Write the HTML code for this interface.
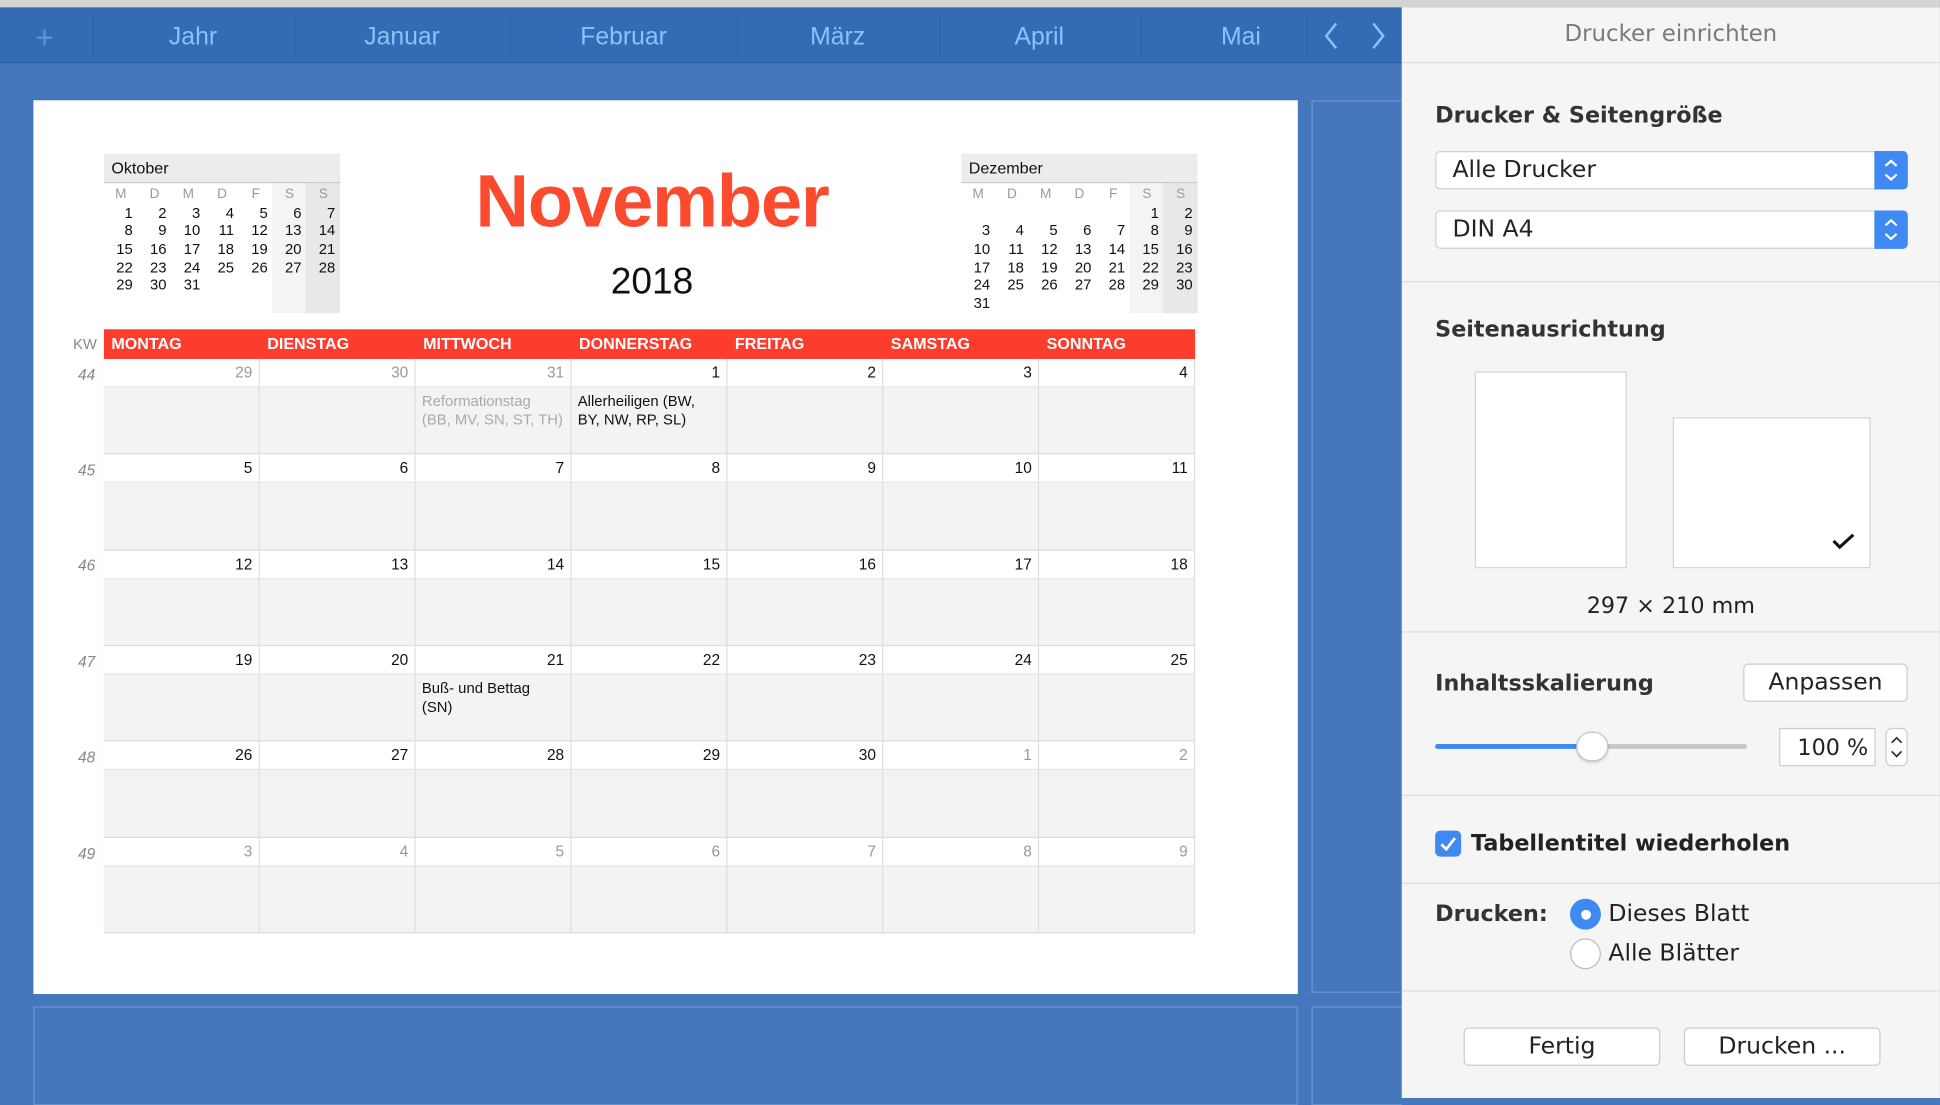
<!DOCTYPE html>
<html><head><meta charset="utf-8"><style>
*{margin:0;padding:0;box-sizing:border-box}
html,body{width:1940px;height:1098px;overflow:hidden;background:#4577bd}
#w{position:absolute;left:0;top:0;width:1568px;height:887px;transform-origin:0 0;transform:scale(1.2372,1.2379);font-family:"Liberation Sans",sans-serif}
.a{position:absolute}
.tb{left:0;top:6px;width:1133px;height:45px;background:#336cb5;border-bottom:1px solid #2c5fa3}
.tl{top:8px;height:45px;line-height:45px;color:#8ec0ff;font-size:20px;transform:translateX(-50%)}
.sep{top:12px;width:1px;height:34px;background:#2d62a8}
.page{left:27px;top:81px;width:1022px;height:722px;background:#fff}
.mini{width:191px;font-size:12px}
.mh{height:24px;background:#ececec;border-bottom:1px solid #ccc;line-height:24px;padding-left:6px;font-size:13px;color:#111}
.mg{display:grid;grid-template-columns:repeat(7,1fr);grid-auto-rows:14.7px;align-content:start;position:relative;padding-top:2px}
.mg div{text-align:right;padding-right:4px;height:14.7px;line-height:14.7px;color:#111}
.mg .l{color:#999;font-size:11px;text-align:center;padding:0}
.red{left:84px;top:266px;width:882px;height:24px;background:#fc3d2e;display:grid;grid-template-columns:repeat(7,126px);color:#fff;font-weight:bold;font-size:13px;line-height:24px}
.red div{padding-left:6px}
.wk{left:84px;width:882px;height:77.33px;display:grid;grid-template-columns:repeat(7,126px)}
.c{border-right:1px solid #dcdcdc;border-bottom:1px solid #dcdcdc;background:#f3f3f3;position:relative}
.c .n{height:23px;background:#fff;text-align:right;padding-right:5px;line-height:23px;font-size:12.5px;color:#111;border-bottom:1px solid #e6e6e6}
.c .g{color:#999}
.c .e{padding:4px 5px;font-size:12px;line-height:14.5px;color:#111;white-space:nowrap}
.kw{left:55px;width:22px;text-align:right;color:#888;font-style:italic;font-size:12.5px}
.sb{left:1133px;top:6px;width:435px;height:881px;background:#f5f5f5;font-family:"DejaVu Sans",sans-serif;color:#222}
.hr{position:absolute;left:0;width:435px;height:1px;background:#ddd}
.h{position:absolute;left:27px;font-weight:bold;font-size:18px;color:#333}
.pop{position:absolute;left:27px;width:382px;height:31px;background:#fff;border:1px solid #d0d0d0;border-radius:4px;font-size:19px;line-height:29px;padding-left:13px}
.cap{position:absolute;right:-1px;top:-1px;width:27px;height:31px;background:#3e8af2;border-radius:0 4px 4px 0}
.btn{position:absolute;height:31px;background:#fff;border:1px solid #ccc;border-radius:4px;text-align:center;font-size:19px;line-height:29px}
</style></head><body><div id="w">
<div class="a" style="left:0;top:0;width:1568px;height:6px;background:#d4d4d4"></div>
<div class="a tb"></div>
<div class="a tl" style="left:36px;color:#5b93dd;font-size:26px">+</div>
<div class="a sep" style="left:75px"></div><div class="a sep" style="left:238px"></div><div class="a sep" style="left:412px"></div><div class="a sep" style="left:596px"></div><div class="a sep" style="left:759px"></div><div class="a sep" style="left:922px"></div><div class="a sep" style="left:1056px"></div>
<div class="a tl" style="left:156px">Jahr</div><div class="a tl" style="left:325px">Januar</div><div class="a tl" style="left:504px">Februar</div><div class="a tl" style="left:677px">März</div><div class="a tl" style="left:840px">April</div><div class="a tl" style="left:1003px">Mai</div>
<svg class="a" style="left:1066px;top:17px" width="60" height="24"><path d="M14 2 L6 12 L14 22 M44 2 L52 12 L44 22" stroke="#8ec0ff" stroke-width="2" fill="none"/></svg>
<div class="a" style="left:1060px;top:81px;width:73px;height:721px;border:1px solid #6d95cf;border-right:none"></div>
<div class="a" style="left:27px;top:813px;width:1022px;height:80px;border:1px solid #6d95cf"></div>
<div class="a" style="left:1060px;top:813px;width:73px;height:80px;border:1px solid #6d95cf;border-right:none"></div>
<div class="a page"></div>

<div class="a" style="left:84px;top:148px;width:191px;height:105px;background:linear-gradient(to right,transparent 136px,#f4f4f4 136px,#f4f4f4 163px,#e8e8e8 163px)"></div>
<div class="a mini" style="left:84px;top:124px">
<div class="mh">Oktober</div>
<div class="mg">
<div class="l">M</div><div class="l">D</div><div class="l">M</div><div class="l">D</div><div class="l">F</div><div class="l">S</div><div class="l">S</div>
<div>1</div><div>2</div><div>3</div><div>4</div><div>5</div><div>6</div><div>7</div>
<div>8</div><div>9</div><div>10</div><div>11</div><div>12</div><div>13</div><div>14</div>
<div>15</div><div>16</div><div>17</div><div>18</div><div>19</div><div>20</div><div>21</div>
<div>22</div><div>23</div><div>24</div><div>25</div><div>26</div><div>27</div><div>28</div>
<div>29</div><div>30</div><div>31</div>
</div></div>

<div class="a" style="left:527px;top:128px;transform:translateX(-50%);color:#fc4a2f;font-size:60px;font-weight:bold;letter-spacing:-1px">November</div>
<div class="a" style="left:527px;top:211px;transform:translateX(-50%);color:#111;font-size:30px">2018</div>

<div class="a" style="left:777px;top:148px;width:191px;height:105px;background:linear-gradient(to right,transparent 136px,#f4f4f4 136px,#f4f4f4 163px,#e8e8e8 163px)"></div>
<div class="a mini" style="left:777px;top:124px">
<div class="mh">Dezember</div>
<div class="mg">
<div class="l">M</div><div class="l">D</div><div class="l">M</div><div class="l">D</div><div class="l">F</div><div class="l">S</div><div class="l">S</div>
<div></div><div></div><div></div><div></div><div></div><div>1</div><div>2</div>
<div>3</div><div>4</div><div>5</div><div>6</div><div>7</div><div>8</div><div>9</div>
<div>10</div><div>11</div><div>12</div><div>13</div><div>14</div><div>15</div><div>16</div>
<div>17</div><div>18</div><div>19</div><div>20</div><div>21</div><div>22</div><div>23</div>
<div>24</div><div>25</div><div>26</div><div>27</div><div>28</div><div>29</div><div>30</div>
<div>31</div>
</div></div>

<div class="a" style="left:59px;top:271px;color:#888;font-size:12px">KW</div>
<div class="a red"><div>MONTAG</div><div>DIENSTAG</div><div>MITTWOCH</div><div>DONNERSTAG</div><div>FREITAG</div><div>SAMSTAG</div><div>SONNTAG</div></div>
<div class="a" style="left:84px;top:290px;width:882px;height:464px;border-left:1px solid #dcdcdc"></div>

<div class="a kw" style="top:296px">44</div>
<div class="a wk" style="top:290px">
<div class="c"><div class="n g">29</div></div><div class="c"><div class="n g">30</div></div>
<div class="c"><div class="n g">31</div><div class="e" style="color:#aaa">Reformationstag<br>(BB, MV, SN, ST, TH)</div></div>
<div class="c"><div class="n">1</div><div class="e">Allerheiligen (BW,<br>BY, NW, RP, SL)</div></div>
<div class="c"><div class="n">2</div></div><div class="c"><div class="n">3</div></div><div class="c"><div class="n">4</div></div></div>

<div class="a kw" style="top:373px">45</div>
<div class="a wk" style="top:367.3px">
<div class="c"><div class="n">5</div></div><div class="c"><div class="n">6</div></div><div class="c"><div class="n">7</div></div><div class="c"><div class="n">8</div></div><div class="c"><div class="n">9</div></div><div class="c"><div class="n">10</div></div><div class="c"><div class="n">11</div></div></div>

<div class="a kw" style="top:450px">46</div>
<div class="a wk" style="top:444.7px">
<div class="c"><div class="n">12</div></div><div class="c"><div class="n">13</div></div><div class="c"><div class="n">14</div></div><div class="c"><div class="n">15</div></div><div class="c"><div class="n">16</div></div><div class="c"><div class="n">17</div></div><div class="c"><div class="n">18</div></div></div>

<div class="a kw" style="top:528px">47</div>
<div class="a wk" style="top:522px">
<div class="c"><div class="n">19</div></div><div class="c"><div class="n">20</div></div><div class="c"><div class="n">21</div><div class="e">Buß- und Bettag<br>(SN)</div></div><div class="c"><div class="n">22</div></div><div class="c"><div class="n">23</div></div><div class="c"><div class="n">24</div></div><div class="c"><div class="n">25</div></div></div>

<div class="a kw" style="top:605px">48</div>
<div class="a wk" style="top:599.3px">
<div class="c"><div class="n">26</div></div><div class="c"><div class="n">27</div></div><div class="c"><div class="n">28</div></div><div class="c"><div class="n">29</div></div><div class="c"><div class="n">30</div></div><div class="c"><div class="n g">1</div></div><div class="c"><div class="n g">2</div></div></div>

<div class="a kw" style="top:683px">49</div>
<div class="a wk" style="top:676.7px">
<div class="c"><div class="n g">3</div></div><div class="c"><div class="n g">4</div></div><div class="c"><div class="n g">5</div></div><div class="c"><div class="n g">6</div></div><div class="c"><div class="n g">7</div></div><div class="c"><div class="n g">8</div></div><div class="c"><div class="n g">9</div></div></div>

<div class="a sb">
<div style="position:absolute;left:0;top:11px;width:435px;text-align:center;color:#7a7a7a;font-size:18.5px">Drucker einrichten</div>
<div class="hr" style="top:44px"></div>
<div class="h" style="top:77px">Drucker &amp; Seitengröße</div>
<div class="pop" style="top:116px">Alle Drucker<div class="cap"><svg width="27" height="31"><path d="M9 12 L13.5 8 L18 12 M9 19 L13.5 23 L18 19" stroke="#fff" stroke-width="1.8" fill="none"/></svg></div></div>
<div class="pop" style="top:164px">DIN A4<div class="cap"><svg width="27" height="31"><path d="M9 12 L13.5 8 L18 12 M9 19 L13.5 23 L18 19" stroke="#fff" stroke-width="1.8" fill="none"/></svg></div></div>
<div class="hr" style="top:221px"></div>
<div class="h" style="top:250px">Seitenausrichtung</div>
<div style="position:absolute;left:59px;top:294px;width:123px;height:159px;background:#fff;border:1px solid #d4d4d4"></div>
<div style="position:absolute;left:219px;top:331px;width:160px;height:122px;background:#fff;border:1px solid #d4d4d4"><svg style="position:absolute;left:126px;top:90px" width="22" height="18"><path d="M3 9 L8 14 L19 4" stroke="#111" stroke-width="2.5" fill="none"/></svg></div>
<div style="position:absolute;left:0;top:473px;width:435px;text-align:center;font-size:18px">297 × 210 mm</div>
<div class="hr" style="top:504px"></div>
<div class="h" style="top:536px">Inhaltsskalierung</div>
<div class="btn" style="left:276px;top:530px;width:133px">Anpassen</div>
<div style="position:absolute;left:27px;top:595px;width:252px;height:4px;background:#c8c8c8;border-radius:2px"><div style="width:127px;height:4px;background:#3e8af2;border-radius:2px"></div></div>
<div style="position:absolute;left:141px;top:585px;width:26px;height:24px;border-radius:12px;background:#fff;border:1px solid #c8c8c8;box-shadow:0 1px 2px rgba(0,0,0,.2)"></div>
<div style="position:absolute;left:305px;top:582px;width:78px;height:31px;background:#fff;border:1px solid #ccc;text-align:right;padding-right:5px;font-size:18px;line-height:31px">100 %</div>
<div style="position:absolute;left:391px;top:582px;width:18px;height:31px;background:#fff;border:1px solid #ccc;border-radius:5px"><svg width="16" height="29"><path d="M4 11 L8 7 L12 11 M4 18 L8 22 L12 18" stroke="#333" stroke-width="1.4" fill="none"/></svg></div>
<div class="hr" style="top:636px"></div>
<div style="position:absolute;left:27px;top:665px;width:21px;height:21px;background:#3e8af2;border-radius:4px"><svg width="21" height="21"><path d="M5 11 L9 15 L16 6" stroke="#fff" stroke-width="2.2" fill="none"/></svg></div>
<div class="h" style="left:56px;top:665px;color:#222">Tabellentitel wiederholen</div>
<div class="hr" style="top:707px"></div>
<div class="h" style="top:722px">Drucken:</div>
<div style="position:absolute;left:136px;top:720px;width:25px;height:25px;border-radius:50%;background:#3e8af2"><div style="position:absolute;left:8.5px;top:8.5px;width:8px;height:8px;border-radius:50%;background:#fff"></div></div>
<div style="position:absolute;left:167px;top:721px;font-size:19px">Dieses Blatt</div>
<div style="position:absolute;left:136px;top:752px;width:25px;height:25px;border-radius:50%;background:#fff;border:1px solid #bbb"></div>
<div style="position:absolute;left:167px;top:753px;font-size:19px">Alle Blätter</div>
<div class="hr" style="top:794px"></div>
<div class="btn" style="left:50px;top:824px;width:159px">Fertig</div>
<div class="btn" style="left:228px;top:824px;width:159px">Drucken ...</div>
</div>
</div></body></html>
